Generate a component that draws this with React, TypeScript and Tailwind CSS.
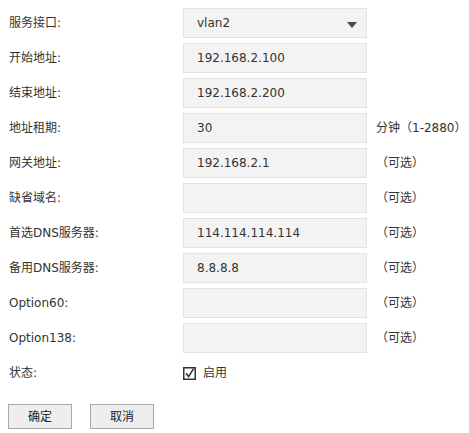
const rows: { label: string; value: string; select?: boolean; note?: string }[] = [
  { label: "服务接口:", value: "vlan2", select: true },
  { label: "开始地址:", value: "192.168.2.100" },
  { label: "结束地址:", value: "192.168.2.200" },
  { label: "地址租期:", value: "30", note: "分钟（1-2880）" },
  { label: "网关地址:", value: "192.168.2.1", note: "（可选）" },
  { label: "缺省域名:", value: "", note: "（可选）" },
  { label: "首选DNS服务器:", value: "114.114.114.114", note: "（可选）" },
  { label: "备用DNS服务器:", value: "8.8.8.8", note: "（可选）" },
  { label: "Option60:", value: "", note: "（可选）" },
  { label: "Option138:", value: "", note: "（可选）" },
]

function Field({ value, select }: { value: string; select?: boolean }) {
  return (
    <div className="relative h-[30px] w-[184px] border border-[#e2e2e2] bg-[#f3f3f3]">
      <input
        readOnly
        value={value}
        className="h-full w-full bg-transparent pl-[13px] text-[12px] text-[#333] outline-none"
      />
      {select && (
        <svg className="absolute right-[9px] top-[13px]" width="10" height="6" viewBox="0 0 10 6">
          <path d="M0 0 H10 L5 6 Z" fill="#4a4a4a" />
        </svg>
      )}
    </div>
  )
}

export default function App() {
  return (
    <div className="min-h-screen bg-white text-[12px] text-[#333] font-['DejaVu_Sans','Noto_Sans_CJK_SC',sans-serif] [text-spacing-trim:space-all]">
      <div className="flex flex-col gap-[5px] pl-[9px] pt-2">
        {rows.map((r) => (
          <div key={r.label} className="flex h-[30px] items-center">
            <div className="w-[174px]">{r.label}</div>
            <Field value={r.value} select={r.select} />
            {r.note && <span className="ml-[9px]">{r.note}</span>}
          </div>
        ))}
        <div className="flex h-[30px] items-center">
          <div className="w-[174px]">状态:</div>
          <svg width="13" height="13" viewBox="0 0 13 13">
            <rect x="0.75" y="0.75" width="11.5" height="11.5" fill="white" stroke="#333" strokeWidth="1.5" />
            <path d="M3 6.2 L5.6 9.6 L10.6 1.6" fill="none" stroke="#333" strokeWidth="1.6" />
          </svg>
          <span className="ml-[7px]">启用</span>
        </div>
      </div>
      <div className="mt-4 flex gap-[18px] pl-2">
        <button className="h-[25px] w-[64px] border border-[#a9a9a9] bg-[#eeeeee] text-[12px] text-[#222]">确定</button>
        <button className="h-[25px] w-[64px] border border-[#a9a9a9] bg-[#eeeeee] text-[12px] text-[#222]">取消</button>
      </div>
    </div>
  )
}
